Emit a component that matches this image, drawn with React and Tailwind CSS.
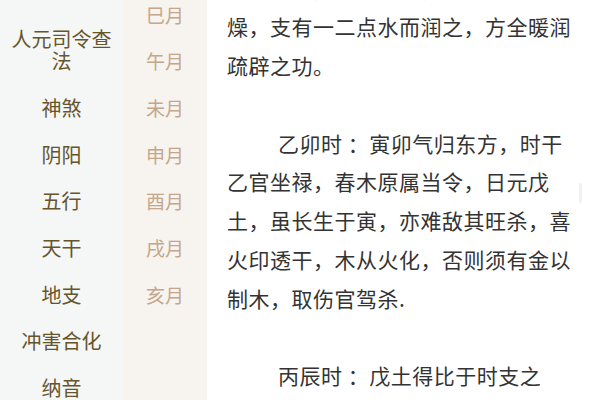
import React from "react";

const categories = [
  { label: "人元司令查法" },
  { label: "神煞" },
  { label: "阴阳" },
  { label: "五行" },
  { label: "天干" },
  { label: "地支" },
  { label: "冲害合化" },
  { label: "纳音" },
];

const months = ["巳月", "午月", "未月", "申月", "酉月", "戌月", "亥月"];

const paragraphs = [
  {
    indent: false,
    text: "丁火透出，丙火透干，则土虽重而不燥，支有一二点水而润之，方全暖润疏辟之功。",
  },
  {
    indent: true,
    text: "乙卯时 ：寅卯气归东方，时干乙官坐禄，春木原属当令，日元戊土，虽长生于寅，亦难敌其旺杀，喜火印透干，木从火化，否则须有金以制木，取伤官驾杀.",
  },
  {
    indent: true,
    text: "丙辰时 ：戊土得比于时支之助，又得丙火偏印生身，身旺能任财官。",
  },
];

export default function App() {
  return (
    <div
      className="relative flex h-[400px] w-[600px] overflow-hidden bg-white"
      style={{ fontFamily: '"Noto Sans CJK SC", "Noto Sans", sans-serif' }}
    >
      {/* 分类菜单 */}
      <div className="w-[123px] shrink-0 bg-[#f5f6f6]">
        <ul className="mt-[15.95px]">
          {categories.map((c) => (
            <li
              key={c.label}
              className="px-[10px] py-[12.35px] text-center text-[20px] leading-[22px] text-[#65552d]"
            >
              {c.label}
            </li>
          ))}
        </ul>
      </div>

      {/* 月份 */}
      <div className="w-[84px] shrink-0 bg-[#f7f3ef]">
        <ul className="mt-[-8.75px]">
          {months.map((m) => (
            <li
              key={m}
              className="py-[12.35px] text-center text-[19px] leading-[22px] text-[#c3a78c]"
            >
              {m}
            </li>
          ))}
        </ul>
      </div>

      {/* 正文 */}
      <div className="min-w-0 flex-1 pl-[20px] pr-[23px]">
        <div className="mt-[-31.5px] space-y-[38.8px] text-[21px] leading-[38.8px] tracking-[0.5px] text-[#333333]">
          {paragraphs.map((p, i) => (
            <p key={i} className={p.indent ? "indent-[51px]" : ""}>
              {p.text}
            </p>
          ))}
        </div>
      </div>

      {/* 滚动条 */}
      <div className="absolute right-[18px] top-[183px] h-[20px] w-[3px] rounded-full bg-[#f2f2f2]" />
    </div>
  );
}
